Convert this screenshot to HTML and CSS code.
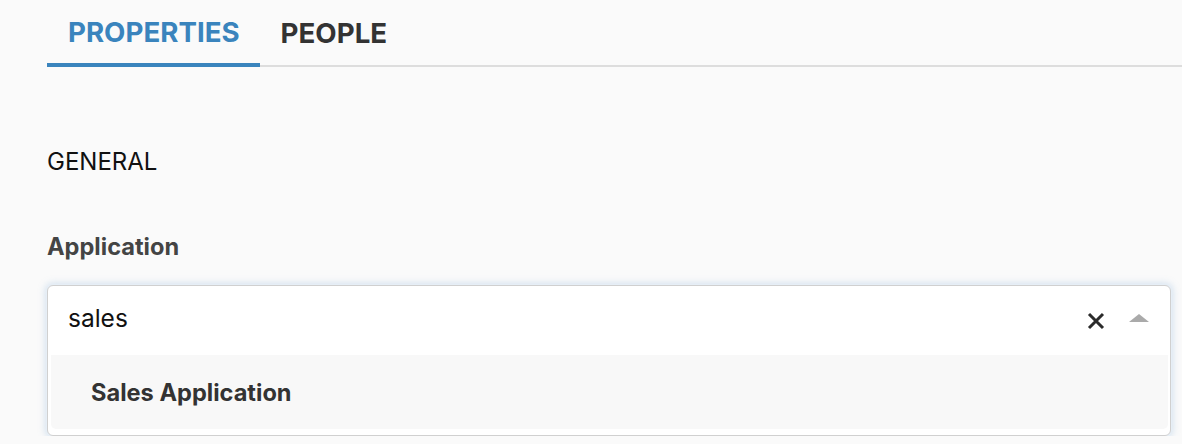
FILE: index.html
```html
<!DOCTYPE html>
<html>
<head>
<meta charset="utf-8">
<link rel="stylesheet" href="styles.css">
</head>
<body>
<div class="page">
  <div class="tabs">
    <div class="tab active">PROPERTIES</div>
    <div class="tab">PEOPLE</div>
    <div class="tab-rest"></div>
  </div>
  <div class="section">GENERAL</div>
  <div class="label">Application</div>
  <div class="select">
    <div class="control">
      <div class="value">sales</div>
      <div class="indicators">
        <svg class="clear" width="18" height="18" viewBox="0 0 18 18"><path d="M2 2 L16 16 M16 2 L2 16" stroke="#2b2b2b" stroke-width="3" stroke-linecap="butt"/></svg>
        <svg class="arrow" width="22" height="10" viewBox="0 0 22 10"><path d="M1 9 L11 1 L21 9 Z" fill="#aaaaaa"/></svg>
      </div>
    </div>
    <div class="menu">
      <div class="option">Sales Application</div>
    </div>
  </div>
</div>
</body>
</html>
```
FILE: styles.css
```css
html, body {
  margin: 0;
  padding: 0;
  background: #fafafa;
  font-family: Inter, "Noto Sans", sans-serif;
}
.page {
  padding-left: 47px;
}
.tabs {
  display: flex;
  align-items: flex-end;
  height: 67px;
}
.tab {
  font-size: 27.7px;
  font-weight: 700;
  color: #333;
  padding: 0 20px 0 21px;
  height: 67px;
  display: flex;
  align-items: center;
  box-sizing: border-box;
  border-bottom: 2px solid #dddddd;
}
.tab.active {
  color: #3a84bd;
  border-bottom: 4px solid #3a84bd;
}
.tab-rest {
  flex: 1;
  border-bottom: 2px solid #dddddd;
}
.section {
  margin-top: 80px;
  font-size: 24px;
  color: #111;
  line-height: 30px;
}
.label {
  margin-top: 55px;
  font-size: 23.6px;
  font-weight: 700;
  color: #444;
  line-height: 30px;
}
.select {
  margin-top: 23px;
  width: 1122px;
  background: #fff;
  border: 1px solid #d0d0d0;
  border-radius: 6px;
  box-shadow: 0 0 0 1px #e6eef6, 0 0 7px 2px rgba(140, 180, 220, 0.35);
  overflow: hidden;
}
.control {
  height: 69px;
  display: flex;
  align-items: center;
  padding-left: 20px;
  padding-right: 20px;
}
.value {
  flex: 1;
  font-size: 24.5px;
  color: #111;
  padding-bottom: 5px;
}
.indicators {
  display: flex;
  align-items: center;
  gap: 23px;
}
.arrow {
  margin-top: -6px;
}
.menu {
  padding: 0 2px 6px 3px;
}
.option {
  background: #f8f8f8;
  height: 74px;
  display: flex;
  align-items: center;
  padding-left: 40px;
  border-radius: 0 0 5px 5px;
  font-size: 23.6px;
  font-weight: 700;
  color: #333;
}
```
